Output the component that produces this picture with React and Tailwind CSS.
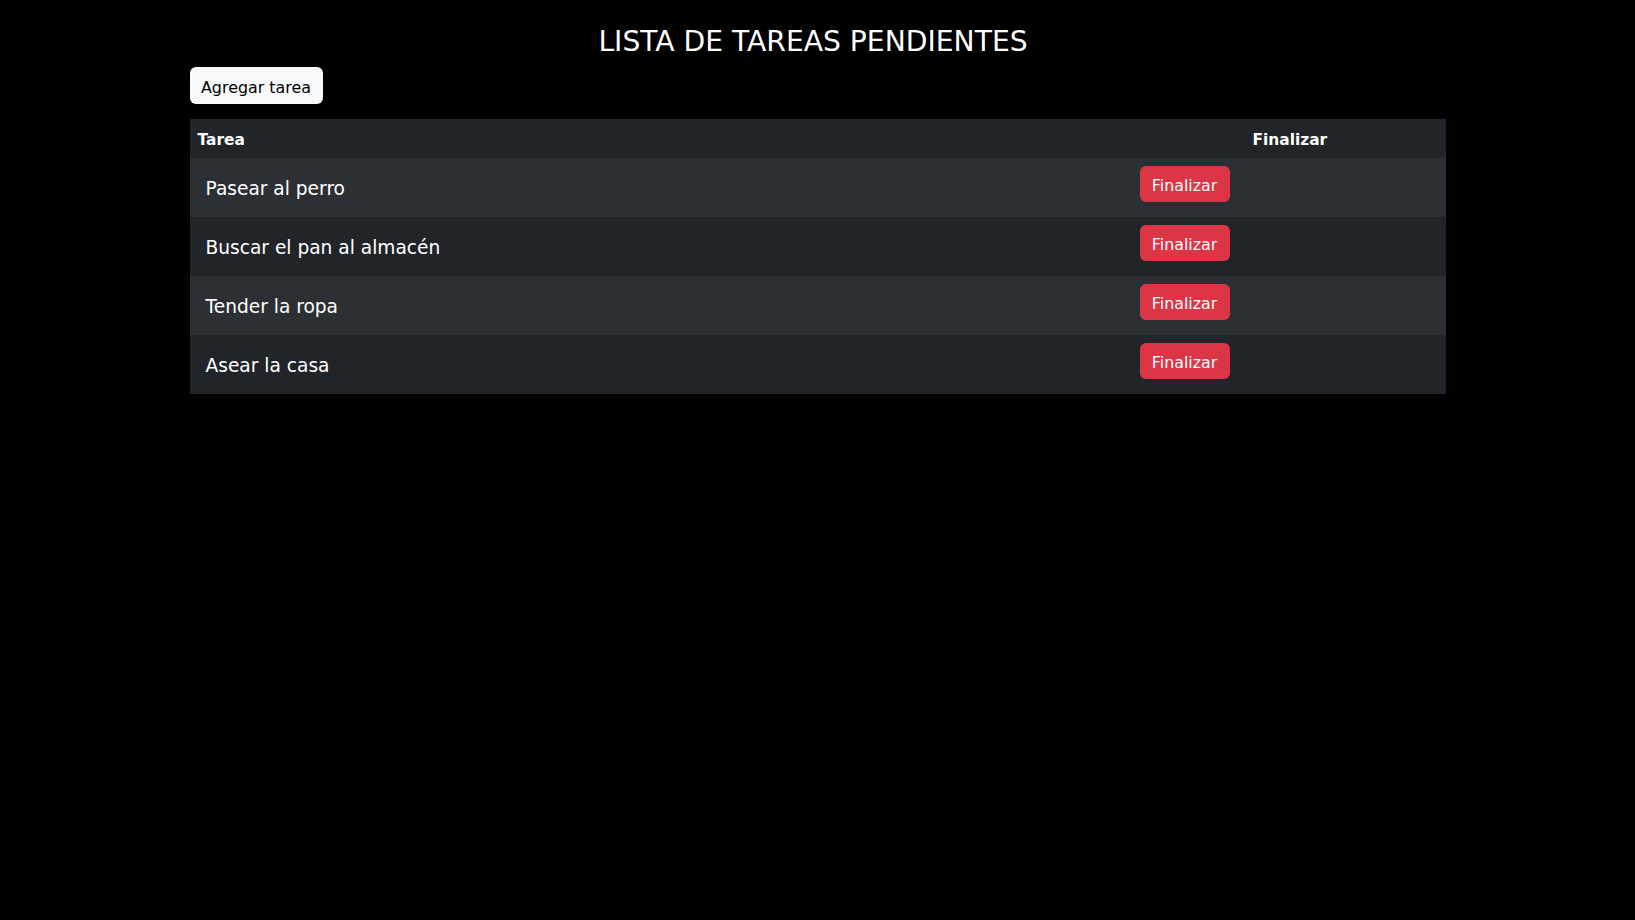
import React from "react";

const tareas = [
  "Pasear al perro",
  "Buscar el pan al almacén",
  "Tender la ropa",
  "Asear la casa",
];

export default function App() {
  return (
    <div
      className="min-h-[920px] w-full bg-black text-white"
      style={{ fontFamily: '"DejaVu Sans", Verdana, sans-serif' }}
    >
      <div className="mx-auto w-[1256px] pt-[25px]">
        <h1 className="pr-[9px] text-center text-[28.2px] leading-[34px] font-normal text-white">
          LISTA DE TAREAS PENDIENTES
        </h1>
        <button className="mt-[8px] h-[37px] w-[133px] rounded-[6px] bg-[#f8f9fa] pt-[4px] text-[15.9px] text-[#000]">
          Agregar tarea
        </button>
        <div className="mt-[15px]">
          <div className="grid h-[39px] grid-cols-[1055px_1fr] items-center bg-[#212529] pt-[4px] text-[15.4px] font-bold">
            <div className="pl-[8px]">Tarea</div>
            <div className="pl-[8px]">Finalizar</div>
          </div>
          {tareas.map((t, i) => (
            <div
              key={t}
              className={
                "grid h-[59px] grid-cols-[950px_1fr] " +
                (i % 2 === 0 ? "bg-[#2c3034]" : "bg-[#212529]")
              }
            >
              <div className="flex items-center pl-[16px] pt-[2px] text-[18.6px]">
                {t}
              </div>
              <div className="pt-[8px]">
                <button className="h-[36px] w-[90px] rounded-[6px] bg-[#dc3545] pt-[4px] text-[15.8px] text-white">
                  Finalizar
                </button>
              </div>
            </div>
          ))}
        </div>
      </div>
    </div>
  );
}
